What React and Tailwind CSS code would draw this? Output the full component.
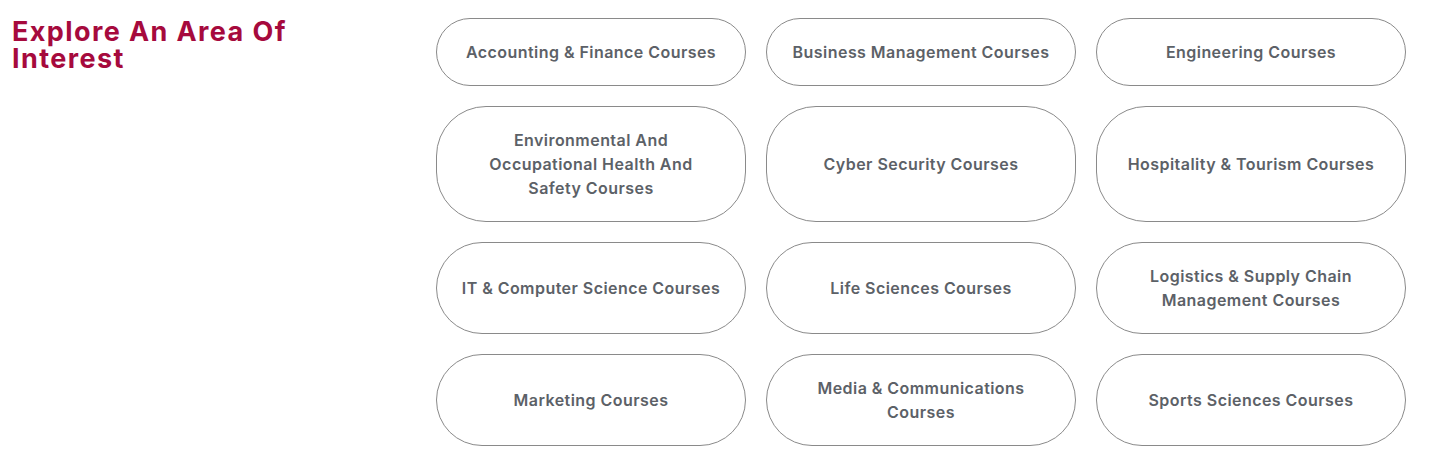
import React from 'react';

const courses = [
    ['Accounting & Finance Courses'],
    ['Business Management Courses'],
    ['Engineering Courses'],
    ['Environmental And', 'Occupational Health And', 'Safety Courses'],
    ['Cyber Security Courses'],
    ['Hospitality & Tourism Courses'],
    ['IT & Computer Science Courses'],
    ['Life Sciences Courses'],
    ['Logistics & Supply Chain', 'Management Courses'],
    ['Marketing Courses'],
    ['Media & Communications', 'Courses'],
    ['Sports Sciences Courses'],
];

function App() {
    return (
        <div className="min-h-screen w-full bg-white" style={{ fontFamily: 'Inter, "Noto Sans", sans-serif' }}>
            <div className="flex pt-[18px] pl-3">
                <div className="w-[424px] shrink-0">
                    <h2 className="text-[27px] leading-[27px] font-bold text-[#a60a3d] tracking-[1.4px]">
                        <span className="block">Explore An Area Of</span>
                        <span className="block">Interest</span>
                    </h2>
                </div>
                <div className="grid w-[970px] grid-cols-3 gap-x-5 gap-y-5">
                    {courses.map((lines, i) => (
                        <a
                            key={i}
                            href="#"
                            className="flex items-center justify-center rounded-[50px] border border-[#8a8a8a] px-5 py-[21px] text-center text-[16px] leading-6 font-semibold tracking-[0.45px] text-[#5c6167] whitespace-nowrap"
                        >
                            <span>
                                {lines.map((l, j) => (
                                    <React.Fragment key={j}>
                                        {j > 0 && <br />}
                                        {l}
                                    </React.Fragment>
                                ))}
                            </span>
                        </a>
                    ))}
                </div>
            </div>
        </div>
    );
}

export default App;
